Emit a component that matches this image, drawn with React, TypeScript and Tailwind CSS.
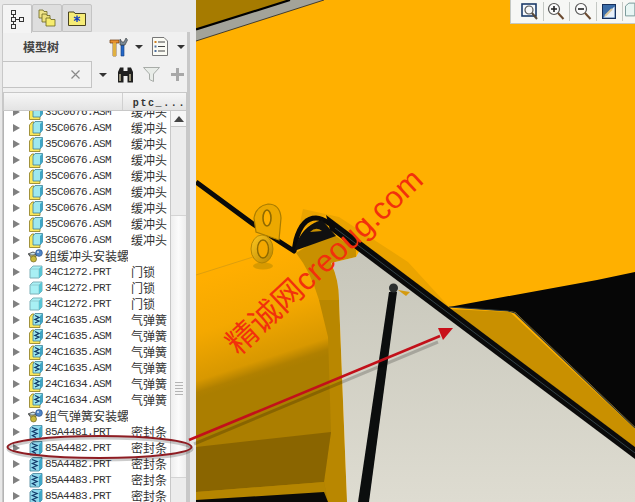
import React from "react";

type RowKind = "asm" | "part" | "spring" | "seal" | "group";

interface Row {
  kind: RowKind;
  name: string;
  note?: string;
}

const rows: Row[] = [
  ...Array.from({ length: 9 }, (): Row => ({ kind: "asm", name: "35C0676.ASM", note: "缓冲头" })),
  { kind: "group", name: "组缓冲头安装螺" },
  ...Array.from({ length: 3 }, (): Row => ({ kind: "part", name: "34C1272.PRT", note: "门锁" })),
  ...Array.from({ length: 4 }, (): Row => ({ kind: "spring", name: "24C1635.ASM", note: "气弹簧" })),
  ...Array.from({ length: 2 }, (): Row => ({ kind: "spring", name: "24C1634.ASM", note: "气弹簧" })),
  { kind: "group", name: "组气弹簧安装螺" },
  { kind: "seal", name: "85A4481.PRT", note: "密封条" },
  { kind: "seal", name: "85A4482.PRT", note: "密封条" },
  { kind: "seal", name: "85A4482.PRT", note: "密封条" },
  { kind: "seal", name: "85A4483.PRT", note: "密封条" },
  { kind: "seal", name: "85A4483.PRT", note: "密封条" },
];

function Caret() {
  return <span className="h-0 w-0 border-x-[4px] border-t-[4px] border-x-transparent border-t-[#333]" />;
}

function RowIcon({ kind }: { kind: RowKind }) {
  if (kind === "group") {
    return (
      <svg width="16" height="14" viewBox="0 0 16 14" className="-ml-[1px]">
        <path d="M1 5 L6 3 L10 5 L5 7 Z" fill="#cfe8f0" stroke="#333" strokeWidth="0.8" />
        <path d="M2 6 L6 11 L10 6 Z" fill="#d8d27a" stroke="#444" strokeWidth="0.8" />
        <circle cx="12" cy="4" r="3.4" fill="#4f86c8" stroke="#274a80" strokeWidth="0.6" />
        <circle cx="11" cy="3" r="1" fill="#dbe9f8" />
        <circle cx="6.5" cy="10" r="3" fill="#c9b93a" stroke="#5c5410" strokeWidth="0.6" />
      </svg>
    );
  }
  if (kind === "part") {
    return (
      <svg width="14" height="14" viewBox="0 0 14 14">
        <path d="M1 4 L4 1 L13 1 L13 10 L10 13 L1 13 Z" fill="#a8f0f4" stroke="#7fb0b8" />
        <path d="M1 4 L10 4 L10 13 M10 4 L13 1" fill="none" stroke="#8ac4cc" strokeWidth="0.8" />
        <path d="M10 4 L13 1 L13 10 L10 13 Z" fill="#58c4d4" />
      </svg>
    );
  }
  const seal = kind === "seal";
  return (
    <svg width="14" height="15" viewBox="0 0 14 15">
      {!seal && <path d="M0.5 4 L3 1 L5 1 L5 11 L11 11 L11 14.5 L0.5 14.5 Z" fill="#fbe85c" stroke="#8a7a20" strokeWidth="0.8" />}
      <path
        d={seal ? "M1 3 L4 0.5 L13 0.5 L13 11 L10 14 L1 14 Z" : "M4 3 L6 0.5 L13.5 0.5 L13.5 9 L11 12 L4 12 Z"}
        fill={seal ? "#8fd8ec" : "#9ee8ee"}
        stroke="#3f7f96"
        strokeWidth="0.8"
      />
      <path d={seal ? "M10 3.5 L13 0.5 L13 11 L10 14 Z" : "M11 3 L13.5 0.5 L13.5 9 L11 12 Z"} fill="#3fa6c6" />
      {kind !== "asm" && (
        <path
          d={seal ? "M3 2.5 L8 4.5 L3.5 6.5 L8 8.5 L3.5 10.5 L7 12.5" : "M6 2.5 L10 4.5 L6 6.5 L10 8 L6 10"}
          fill="none"
          stroke="#123a6a"
          strokeWidth="1.3"
        />
      )}
    </svg>
  );
}

function TreeRow({ row }: { row: Row }) {
  return (
    <div className="flex h-4 items-center">
      <div className="flex w-[124px] shrink-0 items-center overflow-hidden whitespace-nowrap">
        <span className="ml-[9px] h-0 w-0 shrink-0 border-y-[4px] border-l-[7px] border-y-transparent border-l-[#808080]" />
        <span className="ml-[8px] flex w-[15px] shrink-0 justify-center">
          <RowIcon kind={row.kind} />
        </span>
        <span
          className={
            row.kind === "group"
              ? "ml-[2px] font-['Noto_Sans_CJK_SC',sans-serif] text-[12px] text-[#333]"
              : "ml-[2px] font-['Liberation_Mono','Noto_Sans_CJK_SC',monospace] text-[11px] tracking-[-0.6px] text-[#333]"
          }
        >
          {row.name}
        </span>
      </div>
      <span className="ml-[3px] w-[39px] overflow-hidden whitespace-nowrap font-['Noto_Sans_CJK_SC',sans-serif] text-[12px] text-[#333]">
        {row.note}
      </span>
    </div>
  );
}

function Tabs() {
  return (
    <div className="flex h-[32px] items-end pl-[2px] pt-[3px]">
      <div className="z-10 -mb-px flex h-[29px] w-[30px] items-center justify-center rounded-t-[2px] border border-b-0 border-[#c4c4c4] bg-[#f4f4f4]">
        <svg width="14" height="19" viewBox="0 0 14 19" fill="none" stroke="#333">
          <rect x="1.5" y="0.5" width="4" height="4" />
          <rect x="1.5" y="7.5" width="4" height="4" />
          <rect x="1.5" y="14.5" width="4" height="4" />
          <rect x="9.5" y="7.5" width="4" height="4" />
          <path d="M3.5 4.5 V7.5 M3.5 11.5 V14.5 M5.5 9.5 H9.5" />
        </svg>
      </div>
      <div className="flex h-[28px] w-[30px] items-center justify-center rounded-t-[2px] border border-[#c4c4c4] bg-[#dedede]">
        <svg width="18" height="18" viewBox="0 0 18 18" stroke="#6b6420" strokeWidth="0.8">
          <path d="M1 3 L1 1 H5 L6 2.5 H9 V9 H1 Z" fill="#f0e58a" />
          <path d="M4 7 V5 H8 L9 6.5 H12 V13 H4 Z" fill="#ece07c" />
          <path d="M8 11 V9 H12 L13 10.5 H17 V17 H8 Z" fill="#f6ec6e" />
        </svg>
      </div>
      <div className="flex h-[28px] w-[30px] items-center justify-center rounded-t-[2px] border border-[#c4c4c4] bg-[#dedede]">
        <svg width="18" height="15" viewBox="0 0 18 15">
          <path d="M0.5 3 V1 H6 L7 2.5 H17.5 V14.5 H0.5 Z" fill="#f6ec76" stroke="#4a4420" />
          <path d="M9 4.5 V11 M6 6 L12 9.5 M12 6 L6 9.5" stroke="#1740c0" strokeWidth="1.4" />
        </svg>
      </div>
    </div>
  );
}

function TitleBar() {
  return (
    <div className="flex h-[29px] shrink-0 items-center">
      <span className="ml-[20px] shrink-0 whitespace-nowrap font-['Noto_Sans_CJK_SC',sans-serif] text-[12px] font-bold text-[#444]">模型树</span>
      <svg width="19" height="20" viewBox="0 0 19 20" className="ml-[50px] shrink-0">
        <path d="M1 3 H10 V6 H7 V19 H4 V6 H1 Z" fill="#e89030" stroke="#6b3a10" strokeWidth="0.7" />
        <rect x="4" y="6" width="3" height="13" fill="#e0b040" />
        <path d="M12 8 H15 V19 H12 Z" fill="#2468c8" stroke="#123a78" strokeWidth="0.6" />
        <path d="M11 2 L13 5 L15 5 L17 1 L18.5 3 L16 8 L11 8 Z" fill="#7a8a98" stroke="#333" strokeWidth="0.6" />
      </svg>
      <span className="ml-[7px] flex">
        <Caret />
      </span>
      <svg width="16" height="19" viewBox="0 0 16 19" className="ml-[9px] shrink-0">
        <path d="M0.5 0.5 H12 L15.5 4 V18.5 H0.5 Z" fill="#fbfbf4" stroke="#777" />
        <path d="M6 5 H13 M6 9.5 H13 M6 14 H13" stroke="#444" />
        <rect x="2.5" y="4" width="2" height="2" fill="#d08020" />
        <rect x="2.5" y="8.5" width="2" height="2" fill="#5070a0" />
        <rect x="2.5" y="13" width="2" height="2" fill="#5070a0" />
      </svg>
      <span className="ml-[9px] flex">
        <Caret />
      </span>
    </div>
  );
}

function SearchBar() {
  return (
    <div className="flex h-[27px] shrink-0 items-center">
      <div className="flex h-[27px] w-[89px] shrink-0 items-center justify-end border-y border-r border-[#c4c4c4] bg-[#f2f2f2] pr-[11px]">
        <svg width="9" height="9" viewBox="0 0 9 9" stroke="#8a8a8a" strokeWidth="1.2">
          <path d="M0.5 0.5 L8.5 8.5 M8.5 0.5 L0.5 8.5" />
        </svg>
      </div>
      <span className="ml-[7px] flex">
        <Caret />
      </span>
      <svg width="17" height="16" viewBox="0 0 17 16" className="ml-[10px] shrink-0">
        <path d="M1 5 L3 0.5 H6.5 V4 H10.5 V0.5 H14 L16 5 V15.5 H10.5 V9 H6.5 V15.5 H1 Z" fill="#1f1f1f" />
        <path d="M3 7 V14 M13 7 V14" stroke="#c8c0a0" strokeWidth="1.4" />
      </svg>
      <svg width="17" height="15" viewBox="0 0 17 15" className="ml-[9px] shrink-0">
        <path d="M0.5 0.5 H16.5 L10.5 7 V14.5 L6.5 12.5 V7 Z" fill="#e8ece8" stroke="#a8aca8" />
      </svg>
      <svg width="13" height="13" viewBox="0 0 13 13" className="ml-[11px] shrink-0">
        <path d="M5 0 H8 V5 H13 V8 H8 V13 H5 V8 H0 V5 H5 Z" fill="#a8a8a8" />
      </svg>
    </div>
  );
}

function Scrollbar() {
  return (
    <div className="flex w-[17px] shrink-0 flex-col border-x border-[#c8c8c8] bg-[#ececec]">
      <div className="flex h-[16px] shrink-0 items-center justify-center border-b border-[#c8c8c8] bg-[#f6f6f6]">
        <span className="h-0 w-0 border-x-[5px] border-b-[6px] border-x-transparent border-b-[#444]" />
      </div>
      <div className="h-[88px] shrink-0" />
      <div className="flex h-[263px] shrink-0 flex-col items-center border-y border-[#d4d4d4] bg-gradient-to-r from-[#eeeeee] via-[#fbfbfb] to-[#eeeeee] pt-[166px]">
        <span className="h-[13px] w-[8px] bg-[repeating-linear-gradient(to_bottom,#b4b4b4_0,#b4b4b4_1px,#f4f4f4_1px,#f4f4f4_3px)]" />
      </div>
    </div>
  );
}

function ModelTree() {
  return (
    <aside className="flex h-[502px] w-[196px] shrink-0 flex-col overflow-hidden bg-[#e8e8e8]">
      <Tabs />
      <div className="ml-[2px] flex min-h-0 w-[188px] flex-1 flex-col border-l border-r-[3px] border-[#c8c8c8] bg-[#f0f0f0]">
        <TitleBar />
        <SearchBar />
        <div className="mt-[4px] flex h-[19px] shrink-0 border border-[#c8c8c8] bg-gradient-to-b from-[#f6f6f6] to-[#e4e4e4]">
          <div className="w-[124px] border-r border-[#d0d0d0]" />
          <span className="ml-[10px] font-['Liberation_Mono',monospace] text-[10px] font-bold leading-[22px] tracking-[1.6px] text-[#333]">
            ptc_...
          </span>
        </div>
        <div className="flex min-h-0 flex-1 overflow-hidden border-l border-[#b4b4b4] bg-white">
          <div className="-mt-[7px] w-[166px] shrink-0">
            {rows.map((row, i) => (
              <TreeRow key={i} row={row} />
            ))}
          </div>
          <Scrollbar />
        </div>
      </div>
    </aside>
  );
}

function ViewButton({ children, last }: { children: React.ReactNode; last?: boolean }) {
  return (
    <div className={last ? "flex w-[12px] justify-start overflow-hidden pl-[2px]" : "flex w-[27px] items-center justify-center border-r border-[#c4c8c4]"}>
      {children}
    </div>
  );
}

function Magnifier({ mark }: { mark?: "plus" | "minus" }) {
  return (
    <svg width="18" height="19" viewBox="0 0 18 19" fill="none">
      <circle cx="7" cy="7" r="5.5" fill="#fbfbfb" stroke="#555" strokeWidth="1.2" />
      <path d="M11 11 L16.5 17" stroke="#6b4a30" strokeWidth="2" />
      <path d={mark === "plus" ? "M4 7 H10 M7 4 V10" : "M4 7 H10"} stroke="#222" strokeWidth="1.6" />
    </svg>
  );
}

function ViewToolbar() {
  return (
    <div className="absolute right-0 top-0 flex h-[24px] w-[125px] border-l border-b border-[#c4c8c4] bg-[#f6f7f5] py-[2px] pl-[6px]">
      <ViewButton>
        <svg width="17" height="17" viewBox="0 0 17 17" fill="none">
          <rect x="1" y="1" width="14" height="12" fill="#f4f8fc" stroke="#1c3a68" strokeWidth="1.6" />
          <circle cx="8" cy="7" r="4" fill="#f8f8f8" stroke="#555" strokeWidth="1.2" />
          <path d="M11 10 L16 16" stroke="#5a4a3a" strokeWidth="2" />
        </svg>
      </ViewButton>
      <ViewButton>
        <Magnifier mark="plus" />
      </ViewButton>
      <ViewButton>
        <Magnifier mark="minus" />
      </ViewButton>
      <ViewButton>
        <svg width="14" height="15" viewBox="0 0 14 15">
          <rect x="0.5" y="0.5" width="13" height="14" fill="#3a6ca8" stroke="#16305c" />
          <path d="M1.5 13.5 L12.5 2.5 V13.5 Z" fill="#e8f0f8" />
          <path d="M3 12 L10 5" stroke="#d8c8a0" strokeWidth="2" />
        </svg>
      </ViewButton>
      <ViewButton last>
        <svg width="10" height="15" viewBox="0 0 10 15">
          <path d="M0.5 14 V4 L4 1 H10 V14 Z" fill="#e8f6f4" stroke="#7a9a9a" />
        </svg>
      </ViewButton>
    </div>
  );
}

function ModelDrawing() {
  return (
    <svg viewBox="196 0 439 502" className="block h-[502px] w-[439px]">
      <defs>
        <linearGradient id="wall" x1="0" y1="260" x2="0" y2="502" gradientUnits="userSpaceOnUse">
          <stop offset="0" stopColor="#c8c7bb" />
          <stop offset="1" stopColor="#dedcd1" />
        </linearGradient>
        <linearGradient id="lower" x1="230" y1="270" x2="265" y2="376" gradientUnits="userSpaceOnUse">
          <stop offset="0" stopColor="#ffae00" />
          <stop offset="0.45" stopColor="#f4a800" />
          <stop offset="0.85" stopColor="#d89800" />
          <stop offset="0.95" stopColor="#b08000" />
          <stop offset="1" stopColor="#ab7e00" />
        </linearGradient>
        <linearGradient id="ring" x1="0" y1="0" x2="1" y2="1">
          <stop offset="0" stopColor="#ffc820" />
          <stop offset="1" stopColor="#b88400" />
        </linearGradient>
      </defs>

      <rect x="196" y="0" width="439" height="502" fill="#ffb000" />

      {/* top left corner */}
      <path d="M196 0 H290 L196 29 Z" fill="#a67b00" />
      <path d="M196 29 L290 0 H324 L196 41 Z" fill="#a3a39a" />
      <path d="M196 29.5 L290 0" stroke="#000" strokeWidth="2.2" />
      <path d="M196 41 L324 0" stroke="#222" strokeWidth="0.8" />

      {/* lower body */}
      <path d="M196 275 L253 257 L320 236 L332 263 L347 502 H196 Z" fill="url(#lower)" />
      <path d="M196 275 L253 257" stroke="#d69a10" strokeWidth="0.8" />
      <path d="M319 300 L339 300 L347 502 H328 L324 482 L331 432 L328 337 Z" fill="#b98700" />
      <path d="M296 253 L330 232 L356 250 L356 257 L331 263 Q340 280 339 300 L319 300 Q310 270 296 253 Z" fill="#c89000" />
      <path d="M196 447 L331 432 L324 482 L196 492 Z" fill="#8a6500" />
      <path d="M196 492 L324 482 L326 492 L196 500 Z" fill="#b58500" />
      <path d="M196 500 L324 492 L328 502 H196 Z" fill="#0a0a08" />

      {/* wall */}
      <path d="M331 263 L356 257 L360 250 L635 457 V502 H347 L339 300 Q339 280 331 263 Z" fill="url(#wall)" />

      {/* cover tab */}
      <path d="M303 209 L339 217 L408 262 L452 310 L326 215 L298 232 Z" fill="#eba400" />

      {/* right opening */}
      <path d="M449 307 L597 280 L635 272 V427 L515 312 L508 311 Z" fill="#060606" />
      <path d="M449 307 L508 311 L515 313 L635 428" fill="none" stroke="#2b3a42" strokeWidth="1.2" />
      <path d="M449 309 L510 312 L635 429 V447 Z" fill="#c99000" />

      {/* seal */}
      <path
        d="M196 182 L253 224 L280 242 L294 251 L296 240 Q302 218 316 218 Q322 218 330 224"
        fill="none"
        stroke="#0a0a0a"
        strokeWidth="5"
        strokeLinejoin="round"
      />
      <path d="M326 215 L635 447 V459 L330 230 Z" fill="#0a0a0a" />
      <path d="M335 228 L635 453" stroke="#34444a" strokeWidth="1" />
      <path d="M294 251 L336 236 L322 220 Q306 224 298 240 Z" fill="#101010" />
      <path d="M310 232 Q316 226 322 231 Z" fill="#c89000" />

      {/* eye bolts */}
      <path d="M254 218 Q256 206 268 204 Q280 204 281 218 L279 240 L256 232 Z" fill="#eca800" stroke="#a87c00" strokeWidth="1.2" />
      <ellipse cx="267" cy="218" rx="4" ry="8" fill="#ffb000" stroke="#8f6a00" strokeWidth="1.6" />
      <ellipse cx="263" cy="266" rx="10" ry="3.5" fill="#d89a00" />
      <ellipse cx="262" cy="249" rx="11" ry="14" fill="url(#ring)" stroke="#a87c00" strokeWidth="0.8" />
      <ellipse cx="263" cy="249" rx="5.5" ry="9" fill="#f4a800" stroke="#8f6a00" strokeWidth="1.4" />

      {/* gas spring */}
      <path d="M389 292 L397 292 L369 502 H358 Z" fill="#0c0e0e" />
      <circle cx="393.5" cy="288" r="4.5" fill="#2a2e2e" />
      <path d="M398 290 L410 292 L406 296 Z" fill="#d49a10" />
    </svg>
  );
}

function Annotation() {
  return (
    <svg viewBox="0 0 635 502" className="pointer-events-none absolute inset-0 h-[502px] w-[635px]">
      <g stroke="#000" strokeOpacity="0.2" fill="none" strokeWidth="3">
        <ellipse cx="100" cy="449" rx="92" ry="11" />
        <path d="M194 444 L438 342" />
      </g>
      <ellipse cx="99.5" cy="447" rx="92" ry="11" fill="none" stroke="#8e1c22" strokeWidth="2" />
      <path d="M189 440 L440 336" stroke="#c2101a" strokeWidth="2.6" />
      <path d="M453 328 L438 328 L443 340 Z" fill="#c8101a" />
    </svg>
  );
}

export default function App() {
  return (
    <div className="relative flex h-[502px] w-[635px] overflow-hidden bg-white">
      <ModelTree />
      <main className="relative h-[502px] w-[439px] overflow-hidden">
        <ModelDrawing />
        <ViewToolbar />
      </main>
      <Annotation />
      <div className="absolute left-[197px] top-[246px] origin-center -rotate-[43deg] whitespace-nowrap font-['Liberation_Sans','Noto_Sans_CJK_SC',sans-serif] text-[31px] leading-none text-[#f2300c]">
        精诚网creoug.com
      </div>
    </div>
  );
}
